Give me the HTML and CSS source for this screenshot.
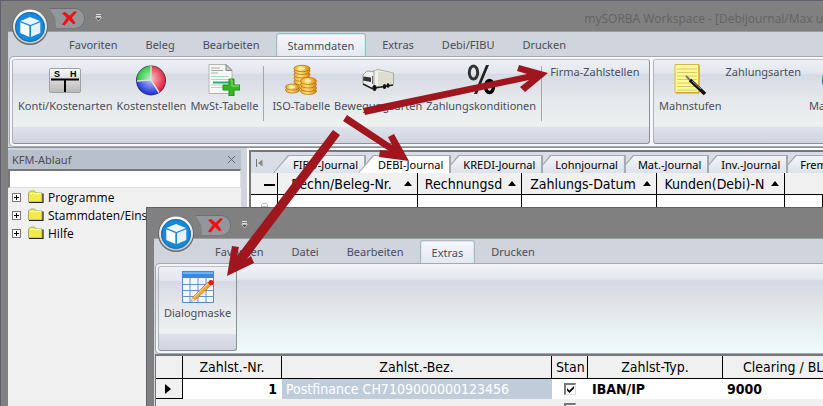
FILE: index.html
```
<!DOCTYPE html>
<html lang="de">

<head>
    <meta charset="UTF-8">
    <title>mySORBA Workspace</title>
    <link rel="stylesheet" href="styles.css">
</head>

<body>
    <!-- Shared symbols, used by both windows -->
    <svg class="defs" width="0" height="0" aria-hidden="true">
        <defs>
            <linearGradient id="rim" x1="0" y1="0" x2="0" y2="1">
                <stop offset="0" stop-color="#ffffff" />
                <stop offset="1" stop-color="#c8c8c8" />
            </linearGradient>
            <linearGradient id="gold" x1="0" x2="1">
                <stop offset="0" stop-color="#f0a818" />
                <stop offset="0.4" stop-color="#ffe486" />
                <stop offset="1" stop-color="#d88408" />
            </linearGradient>
            <linearGradient id="steel" x1="0" y1="0" x2="0" y2="1">
                <stop offset="0" stop-color="#fafafa" />
                <stop offset="1" stop-color="#b8b8b8" />
            </linearGradient>
            <radialGradient id="shine" cx="0.5" cy="0.45" r="0.55">
                <stop offset="0" stop-color="#fff" stop-opacity="0.75" />
                <stop offset="1" stop-color="#fff" stop-opacity="0" />
            </radialGradient>
        </defs>
        <symbol id="logo" viewBox="0 0 38 38">
            <circle cx="19" cy="19" r="18" fill="#686868" />
            <circle cx="19" cy="18.5" r="17" fill="url(#rim)" />
            <circle cx="19" cy="19" r="15" fill="#1888d8" />
            <circle cx="19" cy="19" r="14.4" fill="none" stroke="#1470b8" />
            <path d="M9.5 13 19 9l10 4-9.500 4z" fill="#eef6fc" />
            <path d="M9.300 14.300l9 3.700v11l-9-4z" fill="#fff" />
            <path d="M29.300 14.300l-9.300 3.700v11l9.300-4z" fill="#e4f0fa" />
        </symbol>
        <symbol id="cross" viewBox="0 0 18 16">
            <path d="M1 2 4.500 1 9 5 14.500 0l2.500 1-5.500 6.300 4 5.700-2.500 1-4.500-4.500L4 15.500l-3-1L6 7.500z" fill="#ee1111" />
        </symbol>
        <symbol id="more" viewBox="0 0 7 8">
            <path d="M1 .500h5M1 2.500h5" stroke="#ddd" />
            <path d="M.500 3.500h6l-3 3.500z" fill="#555" stroke="#ccc" stroke-width=".8" />
        </symbol>
        <symbol id="folder" viewBox="0 0 16 14">
            <path d="M.500 12V3l2-2h4l1.500 2h6v9z" fill="#f2ea50" stroke="#a8a860" />
            <path d="M1 12.500h14V3.500" fill="none" stroke="#222" stroke-width="1.200" />
            <path d="M2 3.500h11" stroke="#ffffc0" />
        </symbol>
    </svg>

    <div class="window">
        <header class="titlebar">
            <button class="logo" aria-label="Menü"><svg><use href="#logo" /></svg></button>
            <button class="quick" aria-label="Abbrechen"><svg><use href="#cross" /></svg></button>
            <svg class="more"><use href="#more" /></svg>
            <span class="caption">mySORBA Workspace - [Debijournal/Max u</span>
        </header>

        <div class="frame">
            <nav class="menu">
                <button>Favoriten</button>
                <button>Beleg</button>
                <button>Bearbeiten</button>
                <button class="active">Stammdaten</button>
                <button>Extras</button>
                <button>Debi/FIBU</button>
                <button>Drucken</button>
            </nav>

            <div class="ribbon">
                <div class="group main-group">
                    <button class="tool">
                        <svg viewBox="0 0 32 32">
                            <rect x=".5" y="4.500" width="31" height="24" rx="1.500" fill="url(#steel)" stroke="#a0a0a0" />
                            <path d="M2 15.500h28M16 15.500V28" stroke="#000" stroke-width="2" />
                            <text class="ledger" x="5" y="13">S</text>
                            <text class="ledger" x="21" y="13">H</text>
                        </svg>
                        Konti/Kostenarten
                    </button>
                    <button class="tool">
                        <svg viewBox="0 0 32 32">
                            <circle cx="16" cy="16.500" r="15" fill="#333a66" />
                            <path d="M16 16V2a14.500 14.500 0 0 1 8 26.500z" fill="#e01830" />
                            <path d="M16 16 2 17A14 14 0 0 1 16 2z" fill="#18c028" />
                            <path d="M16 16 2 17a14.500 14.500 0 0 0 22 11.500z" fill="#2038d8" />
                            <circle cx="16" cy="16" r="14" fill="url(#shine)" />
                            <path d="M16 16V2M16 16 2 17M16 16l8 12.500" stroke="#ddd" stroke-width="1.500" />
                        </svg>
                        Kostenstellen
                    </button>
                    <button class="tool">
                        <svg viewBox="0 0 32 32">
                            <path d="M1 .500h17l6 6v23H1z" fill="#f6f8f6" stroke="#b4b4b4" />
                            <path d="M18 .500v6h6z" fill="#ccc" stroke="#888" />
                            <path d="M3 4h9M3 6.500h12M3 9h7" stroke="#aaa" />
                            <path d="M3 12.500h18M3 15.500h18M3 21h14M3 23.500h12" stroke="#a4dcc4" />
                            <path d="M5 18.500h16" stroke="#26a880" stroke-width="2" />
                            <path d="M21 15h5v6h6v5h-6v6h-5v-6h-6v-5h6z" fill="#38b428" stroke="#209018" />
                            <path d="M22 16h2v6h7" fill="none" stroke="#8ce070" />
                        </svg>
                        MwSt-Tabelle
                    </button>
                    <span class="divider"></span>
                    <button class="tool">
                        <svg viewBox="0 0 32 32">
                            <g fill="url(#gold)" stroke="#b87010" stroke-width=".8">
                                <ellipse cx="17" cy="21" rx="8" ry="3.500" />
                                <ellipse cx="17" cy="17.500" rx="8" ry="3.500" />
                                <ellipse cx="17" cy="14" rx="8" ry="3.500" />
                                <ellipse cx="17" cy="10.500" rx="8" ry="3.500" />
                                <ellipse cx="17" cy="7" rx="8" ry="3.500" />
                                <ellipse cx="17" cy="4.500" rx="8" ry="3.200" />
                                <ellipse cx="7.500" cy="26" rx="7" ry="3" />
                                <ellipse cx="7.500" cy="23" rx="7" ry="3" />
                                <ellipse cx="23.500" cy="27" rx="8" ry="3.500" />
                                <ellipse cx="23.500" cy="24" rx="8" ry="3.500" />
                                <ellipse cx="23.500" cy="20.500" rx="8" ry="3.500" />
                                <ellipse cx="23.500" cy="17" rx="8" ry="3.500" />
                            </g>
                            <path d="M13 4.500h7M4 23h6M20 17h6" stroke="#fff3b0" stroke-width="1.500" />
                        </svg>
                        ISO-Tabelle
                    </button>
                    <button class="tool">
                        <svg viewBox="0 0 32 32">
                            <path d="M11 7 16 5.500 31.500 9v12L19 23.500 11 21z" fill="#f2f2ea" stroke="#aaa" />
                            <path d="M16 7.500 31 9v12L16 22.500z" fill="#ddddd0" />
                            <path d="M1 11l4-4 7 .500v15L9 24l-8-4.500z" fill="#eee" stroke="#999" />
                            <path d="M1.500 12.500 9 13.500V18l-8-1.500z" fill="#333" />
                            <path d="M1 20l9 4.500L31 21" fill="none" stroke="#222" stroke-width="1.500" />
                            <path d="M10.500 12v8" stroke="#666" />
                            <g fill="#111">
                                <ellipse cx="12.500" cy="24" rx="2" ry="3" />
                                <ellipse cx="22.500" cy="22.500" rx="1.800" ry="2.500" />
                                <ellipse cx="26" cy="21.500" rx="1.500" ry="2.300" />
                            </g>
                        </svg>
                        Bewegungsarten
                    </button>
                    <button class="tool">
                        <svg viewBox="0 0 32 32">
                            <path d="M21 1h3L12 30H9z" fill="#222" />
                            <ellipse cx="8.500" cy="8.500" rx="4.200" ry="6.500" fill="none" stroke="#333" stroke-width="3" />
                            <ellipse cx="24.500" cy="22.500" rx="4" ry="6" fill="none" stroke="#000" stroke-width="3.500" />
                        </svg>
                        Zahlungskonditionen
                    </button>
                    <span class="divider"></span>
                    <button class="tool">Firma-Zahlstellen</button>
                </div>
                <div class="group next-group">
                    <button class="tool">
                        <svg viewBox="0 0 32 32">
                            <path d="M1 .500h24v28H1z" fill="#fdf89a" stroke="#d8b840" />
                            <path d="M25 1v28H2" fill="none" stroke="#c8a010" />
                            <path d="M3 5h20M3 8.500h20M3 12h20M3 15.500h20M3 19h20M3 22.500h20M3 26h20" stroke="#d8cc60" />
                            <path d="M12 12l5 5" stroke="#777" stroke-width="2" />
                            <path d="M16 16 31 30" stroke="#111" stroke-width="3.500" />
                            <path d="M18 17l9 8" stroke="#999" />
                        </svg>
                        Mahnstufen
                    </button>
                    <button class="tool">Zahlungsarten</button>
                    <button class="tool cut">
                        <svg viewBox="0 0 32 32">
                            <circle cx="16" cy="16" r="15" fill="#3048c0" />
                            <path d="M1 16A15 15 0 0 1 16 1v15z" fill="#58a868" />
                        </svg>
                        Mahntexte
                    </button>
                </div>
            </div>

            <div class="workspace">
                <aside class="sidebar">
                    <div class="side-title">KFM-Ablauf<button aria-label="Schliessen"><svg viewBox="0 0 9 9"><path d="M1 1l7 7M8 1 1 8" stroke="#666" /></svg></button></div>
                    <input class="search" type="text" aria-label="Suche">
                    <ul class="tree">
                        <li><button aria-label="Öffnen"></button><svg><use href="#folder" /></svg>Programme</li>
                        <li><button aria-label="Öffnen"></button><svg><use href="#folder" /></svg>Stammdaten/Einstellungen</li>
                        <li><button aria-label="Öffnen"></button><svg><use href="#folder" /></svg>Hilfe</li>
                    </ul>
                </aside>

                <main class="journal">
                    <nav class="sheets">
                        <button class="first" aria-label="Erste"><svg viewBox="0 0 7 8"><path d="M.500 0v8" stroke="#777" /><path d="M6.500.500v7L2 4z" fill="#888" /></svg></button>
                        <button class="sheet">FIBU-Journal</button>
                        <button class="sheet active">DEBI-Journal</button>
                        <button class="sheet">KREDI-Journal</button>
                        <button class="sheet">Lohnjournal</button>
                        <button class="sheet">Mat.-Journal</button>
                        <button class="sheet">Inv.-Journal</button>
                        <button class="sheet">Fremdjournal</button>
                    </nav>
                    <table class="grid sortable">
                        <colgroup>
                            <col class="w-mark">
                            <col class="w-nr">
                            <col class="w-date">
                            <col class="w-pay">
                            <col class="w-customer">
                            <col>
                        </colgroup>
                        <tr>
                            <th><span class="minus"></span></th>
                            <th>Rechn/Beleg-Nr.</th>
                            <th>Rechnungsd</th>
                            <th>Zahlungs-Datum</th>
                            <th>Kunden(Debi)-N</th>
                            <th class="blank"></th>
                        </tr>
                        <tr>
                            <td class="mark"><svg viewBox="0 0 7 8"><path d="M.500 7V2l1-1.500h4l1 1.500v5M1 3.500h5" fill="none" stroke="#bbb" /></svg></td>
                            <td></td>
                            <td></td>
                            <td></td>
                            <td></td>
                            <td></td>
                        </tr>
                    </table>
                </main>
            </div>
        </div>
    </div>

    <div class="window dialog">
        <header class="titlebar">
            <button class="logo" aria-label="Menü"><svg><use href="#logo" /></svg></button>
            <button class="quick" aria-label="Abbrechen"><svg><use href="#cross" /></svg></button>
            <svg class="more"><use href="#more" /></svg>
        </header>
        <div class="frame">
            <nav class="menu">
                <button>Favoriten</button>
                <button>Datei</button>
                <button>Bearbeiten</button>
                <button class="active">Extras</button>
                <button>Drucken</button>
            </nav>
            <div class="ribbon tinted">
                <div class="group">
                    <button class="tool">
                        <svg viewBox="0 0 32 32">
                            <path d="M.500 1h31v30.500H.500z" fill="#f4f6fa" stroke="#5888c8" />
                            <path d="M0 0h32v7H0z" fill="#3c88e0" />
                            <path d="M1 1h30v2H1z" fill="#70b0f4" />
                            <path d="M0 13.500h32M0 19.500h32M0 25.500h32M8 7v24M16 7v24M24 7v24" stroke="#6890c8" />
                            <path d="M9 31l2-5L26 11l3 3-15 14z" fill="#f4a830" stroke="#c07818" stroke-width=".8" />
                            <path d="M11.500 26.500 26.500 12" stroke="#ffdc90" />
                            <path d="M9 31l1.500-4 2.500 2z" fill="#f6e0b8" />
                            <circle cx="29" cy="11.500" r="2.600" fill="#ee1418" />
                        </svg>
                        Dialogmaske
                    </button>
                </div>
            </div>
            <table class="grid accounts">
                <colgroup>
                    <col class="w-mark">
                    <col class="w-number">
                    <col class="w-name">
                    <col class="w-flag">
                    <col class="w-type">
                    <col>
                </colgroup>
                <tr>
                    <th></th>
                    <th>Zahlst.-Nr.</th>
                    <th>Zahlst.-Bez.</th>
                    <th>Stan</th>
                    <th>Zahlst-Typ.</th>
                    <th class="clearing">Clearing / BL</th>
                </tr>
                <tr>
                    <td class="mark"><svg viewBox="0 0 7 10"><path d="M0 0v10l6-5z" fill="#000" /></svg></td>
                    <td class="number">1</td>
                    <td class="selected">Postfinance CH7109000000123456</td>
                    <td class="flag"><input type="checkbox" checked aria-label="Standard"></td>
                    <td>IBAN/IP</td>
                    <td>9000</td>
                </tr>
                <tr class="empty">
                    <td></td>
                    <td></td>
                    <td></td>
                    <td class="flag"><input type="checkbox" aria-label="Standard"></td>
                    <td></td>
                    <td></td>
                </tr>
            </table>
        </div>
    </div>

    <svg class="arrows" width="823" height="406" viewBox="0 0 823 406" aria-hidden="true">
        <path d="M363 108 527 74 517 71 519 65 548 73 525 92 520 87 529 80 365 115z" />
        <path d="M347 115 392 145 388 137 394 134 409 161 379 157 380 150 389 151 343 121z" />
        <path d="M333 130 340 135 247 259 251 256 254 263 227 276 232 246 239 247 237 256z" />
    </svg>
</body>

</html>
```
FILE: styles.css
```
* {
    box-sizing: border-box;
}

body {
    margin: 0;
    height: 100vh;
    position: relative;
    overflow: hidden;
    background-color: #808080;
    font-family: "Noto Sans", "Open Sans", sans-serif;
    font-size: 11px;
    color: #4a4e5a;
}

button {
    background: none;
    border: none;
    padding: 0;
    margin: 0;
    font: inherit;
    color: inherit;
    white-space: nowrap;
}

svg {
    display: block;
}

.defs {
    position: absolute;
}

/* Windows */
.window {
    height: 100%;
    display: flex;
    flex-direction: column;
    padding-left: 7px;
    background-color: #808080;
    border-left: 1px solid #5f606a;
    border-top: 1px solid #5f606a;
    position: relative;
    overflow: hidden;
}

.dialog {
    position: absolute;
    left: 146px;
    top: 207px;
    right: 0;
    bottom: 0;
    height: auto;
}

.titlebar {
    height: 30px;
    flex: none;
    display: flex;
    align-items: center;
    padding-left: 41px;
}

.logo {
    position: absolute;
    left: 10px;
    top: 7px;
    z-index: 1;
}

.logo svg {
    width: 38px;
    height: 38px;
}

.quick {
    width: 36px;
    height: 21px;
    margin-top: 4px;
    padding-left: 11px;
    background-color: #93979c;
    border: 1px solid #6c7074;
    border-radius: 0 10px 10px 0;
    clip-path: polygon(0 0, 100% 0, 100% 100%, 20% 100%, 18% 50%);
}

.quick svg {
    width: 17px;
    height: 15px;
}

.more {
    width: 7px;
    height: 8px;
    margin: 4px 0 0 10px;
}

.caption {
    margin-left: auto;
    padding-top: 4px;
    color: #636363;
    font-family: "Open Sans", sans-serif;
    font-size: 12px;
    white-space: nowrap;
}

.frame {
    flex: 1;
    min-height: 0;
    display: flex;
    flex-direction: column;
    background-color: #cfd4dd;
    border-top: 1px solid #9a9ca2;
}

.menu {
    height: 24px;
    flex: none;
    display: flex;
    padding: 1px 0 0 49px;
    gap: 4px;
}

.menu button {
    padding: 0 11px;
    border: 1px solid transparent;
    border-radius: 3px 3px 0 0;
}

.menu .active {
    background-image: linear-gradient(#f4f6fa, #e4e9f1);
    border-color: #b0b4bc;
    border-bottom: none;
    box-shadow: inset 1px 1px #c4f0f4, inset -1px 0 #c4f0f4;
}

/* Ribbon */
.ribbon {
    flex: none;
    display: flex;
    gap: 3px;
    margin-left: 1px;
    height: 91px;
    padding: 2px 0 2px 2px;
    overflow: hidden;
    background-color: #f6f7fa;
    border: 1px solid #a4a8b0;
    border-right: none;
    border-radius: 5px 0 0 5px;
}

.tinted {
    background-image: linear-gradient(#f2f4f8, #e2e6ee 17%, #d5d9e4 19%, #e4e9ea 55%, #eefafa 95%);
}

.group {
    display: flex;
    align-items: flex-start;
    gap: 4px;
    flex: none;
    padding: 4px 5px;
    border: 1px solid #8c9096;
    border-top-color: #c0c2c8;
    border-left-color: #b0b2b8;
    border-radius: 3px;
    background-image: linear-gradient(#eef0f6, #e2e6ee 16%, #d6dae4 17%, #e6e9ec 50%, #edf2f0 80%, #dde2ec 81%, #d0d4de);
}

.main-group {
    width: 638px;
}

.next-group {
    width: 260px;
}

.tool {
    display: flex;
    flex-direction: column;
    align-items: center;
    gap: 2px;
    line-height: 16px;
}

.tool svg {
    width: 32px;
    height: 32px;
}

.cut {
    padding-left: 4px;
}

.ledger {
    font: bold 9px "Liberation Sans", sans-serif;
    fill: #000;
}

.divider {
    width: 1px;
    height: 55px;
    margin: 2px 4px 0 1px;
    background-color: #a4a8ac;
}

/* Left panel */
.workspace {
    flex: 1;
    min-height: 0;
    display: flex;
    gap: 8px;
    padding-top: 2px;
    border-top: 1px solid #8c9098;
}

.sidebar {
    width: 233px;
    flex: none;
    background-color: #f0f0f0;
}

.side-title {
    height: 19px;
    display: flex;
    align-items: center;
    justify-content: space-between;
    padding: 0 5px 0 4px;
    background-color: #b8c0cb;
}

.side-title svg {
    width: 9px;
    height: 9px;
}

.search {
    display: block;
    width: 100%;
    height: 19px;
    border: 1px solid #ddd;
    border-top: 2px solid #777;
    border-left: 2px solid #777;
    background-color: #fff;
}

.tree {
    margin: 0;
    padding: 0 4px;
    list-style: none;
    color: #000;
    font-family: "Open Sans", sans-serif;
    font-size: 12px;
}

.tree li {
    height: 18px;
    display: flex;
    align-items: center;
    white-space: nowrap;
}

/* plus box */
.tree button {
    width: 9px;
    height: 9px;
    border: 1px solid #777;
    background: linear-gradient(#000, #000) center / 5px 1px no-repeat, linear-gradient(#000, #000) center / 1px 5px no-repeat, #fff;
}

.tree svg {
    width: 16px;
    height: 14px;
    margin: 0 4px 0 7px;
}

/* Journal */
.journal {
    flex: 1;
    min-width: 0;
    overflow: hidden;
    background-color: #fff;
    border-top: 2px solid #777;
    border-left: 2px solid #777;
    outline: 2px solid #fff;
}

.sheets {
    height: 21px;
    display: flex;
    background-color: #d8dde6;
    color: #000;
}

.first {
    width: 29px;
    flex: none;
    padding-left: 5px;
}

.first svg {
    width: 7px;
    height: 8px;
}

.sheet {
    position: relative;
    flex: none;
    margin: 3px 0 0 -8px;
    padding: 0 8px 0 20px;
}

.first + .sheet {
    margin-left: -7px;
}

/* slanted tab: outline layer below, face layer on top */
.sheet::before,
.sheet::after {
    content: "";
    position: absolute;
    inset: 0;
    z-index: -1;
    clip-path: polygon(0 100%, 15px 0, 100% 0, 100% 100%);
    background-color: #a4a8b2;
}

.sheet::after {
    inset: 1px 2px 0 1px;
    background: linear-gradient(#f4f5f9, #dde1ea);
}

.sheet.active::after {
    background: #fff;
}

.sheet:nth-child(2) {
    z-index: 6;
}

.sheet:nth-child(3) {
    z-index: 7;
}

.sheet:nth-child(4) {
    z-index: 5;
}

.sheet:nth-child(5) {
    z-index: 4;
}

.sheet:nth-child(6) {
    z-index: 3;
}

.sheet:nth-child(7) {
    z-index: 2;
}

.sheet:nth-child(8) {
    z-index: 1;
}

/* Tables */
.grid {
    width: 100%;
    table-layout: fixed;
    border-collapse: separate;
    border-spacing: 0;
    color: #000;
    font-family: "DejaVu Sans Condensed", "DejaVu Sans", sans-serif;
    font-size: 14px;
    background-color: #fff;
}

.grid th {
    height: 22px;
    padding: 0 6px;
    font-weight: normal;
    background-color: #f0f0f0;
    border-bottom: 1px solid #000;
    border-right: 1px solid #000;
    white-space: nowrap;
    overflow: hidden;
}

.grid td {
    height: 20px;
    padding: 0 4px;
    border-right: 1px solid #000;
    white-space: nowrap;
    overflow: hidden;
}

.sortable th {
    position: relative;
    padding: 0 14px 0 2px;
}

.sortable .blank {
    border-right: none;
}

/* sort arrow in the right corner of the header */
.sortable th:not(:first-child):not(.blank)::after {
    content: "";
    position: absolute;
    right: 5px;
    top: 8px;
    border: 4px solid transparent;
    border-top: none;
    border-bottom: 5px solid #000;
}

.minus {
    display: block;
    width: 11px;
    height: 2px;
    margin: 2px 0 0 11px;
    background-color: #000;
}

.sortable .mark svg {
    width: 7px;
    height: 8px;
    margin: 4px 0 0 6px;
}

.w-mark {
    width: 27px;
}

.w-nr {
    width: 140px;
}

.w-date {
    width: 104px;
}

.w-pay {
    width: 135px;
}

.w-customer {
    width: 128px;
}

.w-number {
    width: 99px;
}

.w-name {
    width: 270px;
}

.w-flag {
    width: 36px;
}

.w-type {
    width: 135px;
}

.accounts {
    margin-left: 1px;
    border-top: 2px solid #777;
    border-left: 1px solid #777;
}

.accounts th {
    height: 23px;
    padding: 0 4px;
}

.accounts td {
    border-right: none;
    font-weight: bold;
}

.accounts .mark {
    padding-left: 9px;
    background-color: #f0f0f0;
    border-right: 1px solid #000;
    border-bottom: 1px solid #000;
}

.mark svg {
    width: 7px;
    height: 10px;
}

.accounts .number {
    text-align: right;
    padding-right: 5px;
}

.accounts .selected {
    background-color: #bfccda;
    color: #fff;
    font-weight: normal;
}

.accounts .clearing {
    text-align: left;
    padding-left: 20px;
}

.accounts .empty td {
    background-color: #f0f0f0;
}

.accounts .flag {
    padding: 0 0 0 12px;
}

.flag input {
    appearance: none;
    display: block;
    width: 12px;
    height: 12px;
    margin: 0;
    padding: 1px;
    background-color: #fff;
    border: 1px solid #ddd;
    border-top: 2px solid #777;
    border-left: 2px solid #777;
}

.flag input:checked::before {
    content: "";
    display: block;
    width: 7px;
    height: 7px;
    background-color: #000;
    clip-path: polygon(0 30%, 35% 65%, 100% 0, 100% 35%, 35% 100%, 0 65%);
}

/* Pointers drawn across both windows */
.arrows {
    position: absolute;
    left: 0;
    top: 0;
    z-index: 10;
    fill: #a0161e;
    pointer-events: none;
}
```
